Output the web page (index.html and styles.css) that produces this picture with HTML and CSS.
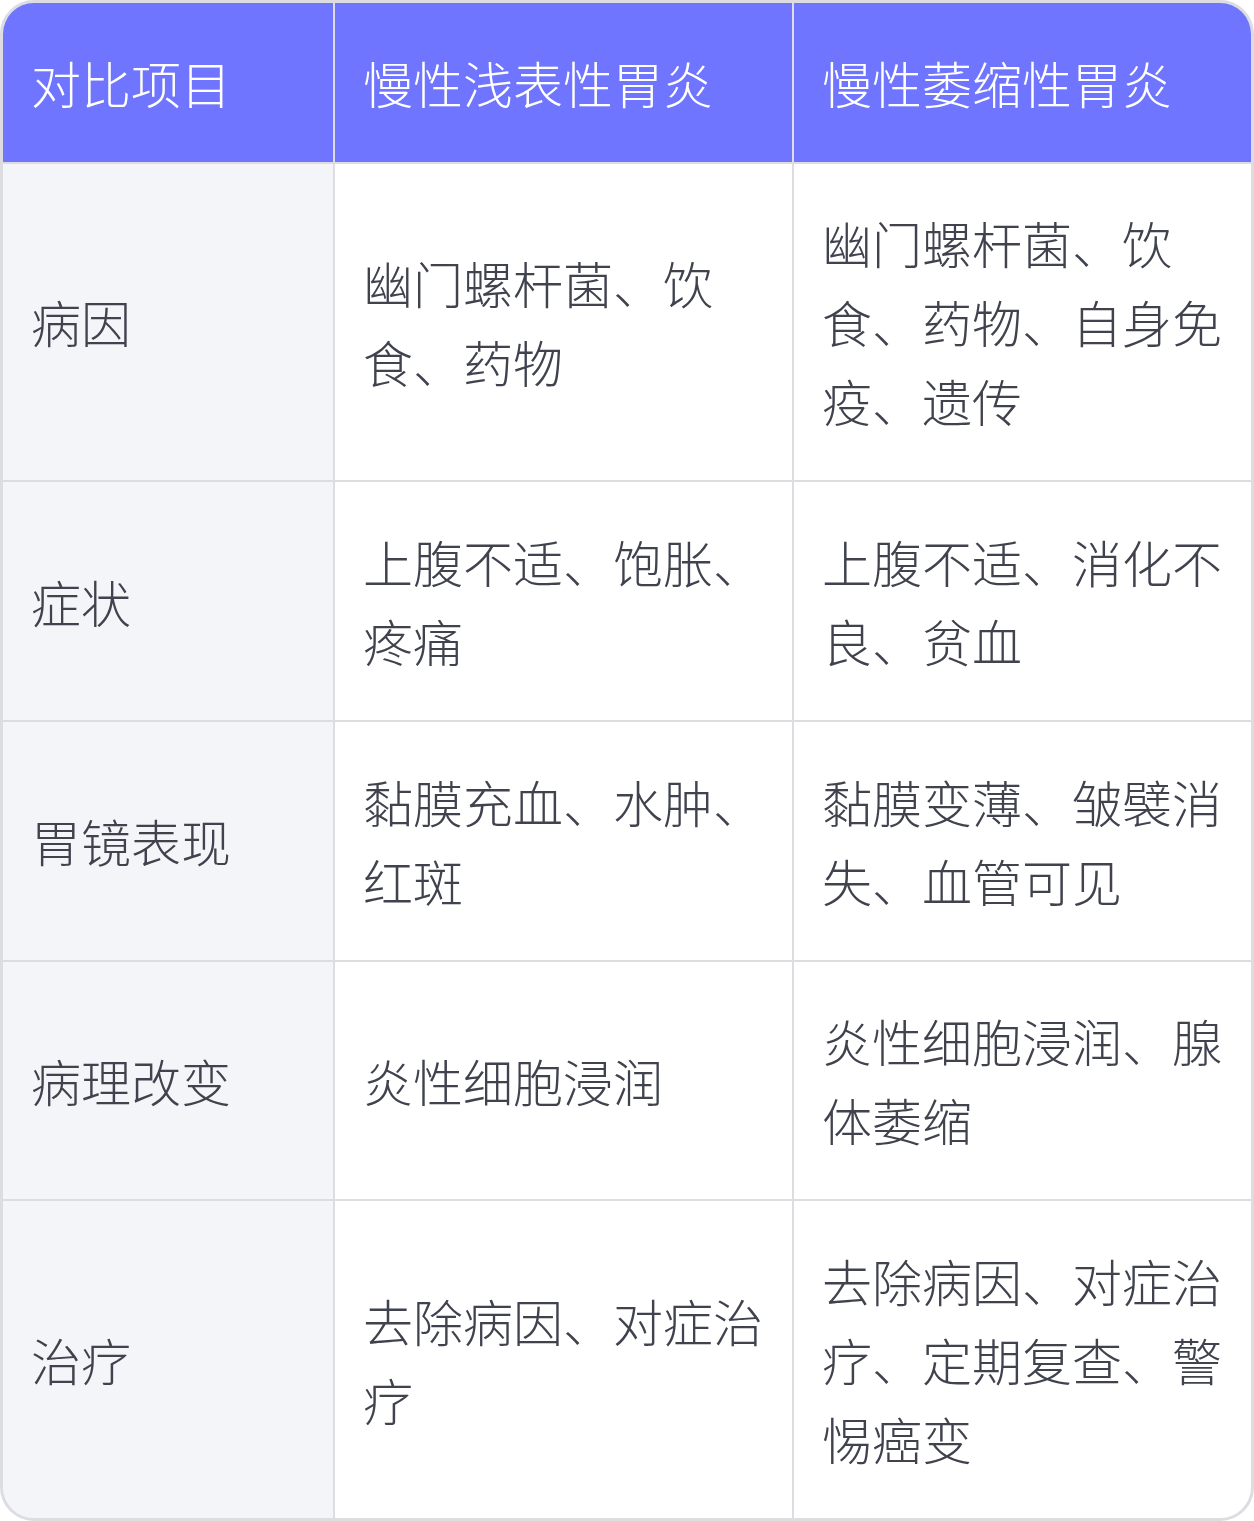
FILE: index.html
```html
<!DOCTYPE html>
<html lang="zh-CN">
<head>
<meta charset="utf-8">
<title>慢性胃炎对比</title>
<link rel="stylesheet" href="styles.css">
</head>
<body>
<div class="table-wrap">
  <div class="grid">
    <div class="cell head">对比项目</div>
    <div class="cell head">慢性浅表性胃炎</div>
    <div class="cell head">慢性萎缩性胃炎</div>

    <div class="cell label">病因</div>
    <div class="cell">幽门螺杆菌、饮食、药物</div>
    <div class="cell">幽门螺杆菌、饮食、药物、自身免疫、遗传</div>

    <div class="cell label">症状</div>
    <div class="cell">上腹不适、饱胀、疼痛</div>
    <div class="cell">上腹不适、消化不良、贫血</div>

    <div class="cell label">胃镜表现</div>
    <div class="cell">黏膜充血、水肿、红斑</div>
    <div class="cell">黏膜变薄、皱襞消失、血管可见</div>

    <div class="cell label">病理改变</div>
    <div class="cell">炎性细胞浸润</div>
    <div class="cell">炎性细胞浸润、腺体萎缩</div>

    <div class="cell label">治疗</div>
    <div class="cell">去除病因、对症治疗</div>
    <div class="cell">去除病因、对症治疗、定期复查、警惕癌变</div>
  </div>
</div>
</body>
</html>
```

FILE: styles.css
```css
* { box-sizing: border-box; }
html, body { margin: 0; padding: 0; background: #ffffff; }
body {
  font-family: "Noto Sans CJK SC", "Noto Sans", sans-serif;
  font-weight: 300;
}
.table-wrap {
  width: 1254px;
  height: 1521px;
  border: 3px solid #dcdce1;
  border-radius: 34px;
  overflow: hidden;
  background: #dcdce1;
}
.grid {
  display: grid;
  grid-template-columns: 330px 457px 457px;
  column-gap: 2px;
  row-gap: 2px;
  height: 100%;
  background: #dcdce1;
}
.cell {
  background: #ffffff;
  color: #40434e;
  font-size: 50px;
  line-height: 79px;
  padding: 39px 28px 39px 28px;
  display: flex;
  align-items: center;
}
.head {
  background: #6f75ff;
  color: #ffffff;
}
.label {
  background: #f4f5f9;
}
```
